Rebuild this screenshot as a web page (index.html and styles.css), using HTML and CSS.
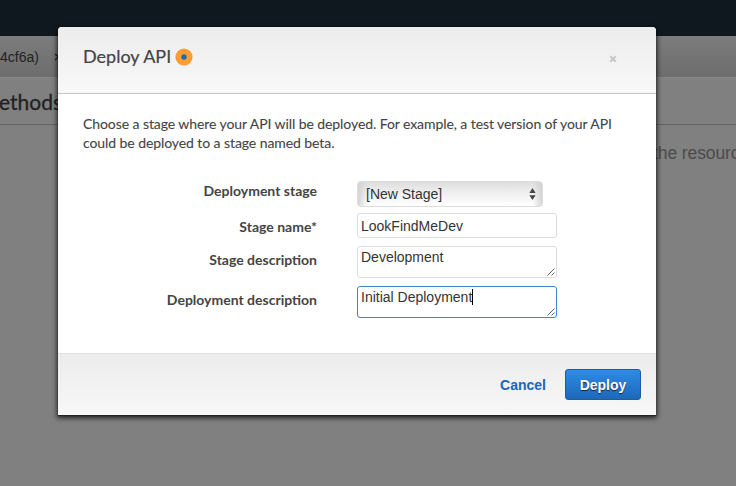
FILE: index.html
```html
<!DOCTYPE html>
<html lang="en">
<head>
<meta charset="utf-8">
<title>Deploy API</title>
<link rel="stylesheet" href="styles.css">
</head>
<body>
<div class="page">
  <div class="topbar"></div>
  <nav class="crumbs"><span>4cf6a)</span><svg class="chevron" width="6" height="10" viewBox="0 0 6 10"><path d="M1 2l3.5 3L1 8" fill="none" stroke="#222" stroke-width="1.3"/></svg></nav>
  <div class="heading"><h1>ethods</h1></div>
  <p class="hint">the resourc</p>
</div>
<section class="modal" role="dialog">
  <header class="modal-header">
    <h2>Deploy API</h2>
    <svg class="info" width="18" height="18" viewBox="0 0 18 18"><circle cx="9" cy="9" r="8.6" fill="#ff9c33"/><circle cx="9" cy="9" r="2.7" fill="#146eb4"/></svg>
    <svg class="close" width="8" height="8" viewBox="0 0 8 8"><path d="M1.2 1.2l5.6 5.6M6.8 1.2L1.2 6.8" stroke="#c8c8c8" stroke-width="2"/></svg>
  </header>
  <div class="modal-body">
    <p class="intro">Choose a stage where your API will be deployed. For example, a test version of your API<br>could be deployed to a stage named beta.</p>
    <div class="form">
      <div class="row row-select"><span class="label">Deployment stage</span>
        <div class="select"><span>[New Stage]</span><svg width="7" height="14" viewBox="0 0 7 14"><path d="M3.5 1L6.6 6H.4zM3.5 13L6.6 8.3H.4z" fill="#444"/></svg></div></div>
      <div class="row row-name"><span class="label">Stage name*</span><div class="field" role="textbox">LookFindMeDev</div></div>
      <div class="row row-area"><span class="label">Stage description</span>
        <div class="field area" role="textbox">Development<svg class="grip" width="8" height="8" viewBox="0 0 8 8"><path d="M.5 7.5l7-7M4.5 7.5l3-3" stroke="#555" stroke-width=".9"/></svg></div></div>
      <div class="row row-area"><span class="label">Deployment description</span>
        <div class="field area focused" role="textbox">Initial Deployment<span class="caret"></span><svg class="grip" width="8" height="8" viewBox="0 0 8 8"><path d="M.5 7.5l7-7M4.5 7.5l3-3" stroke="#555" stroke-width=".9"/></svg></div></div>
    </div>
  </div>
  <footer class="modal-footer"><a class="cancel">Cancel</a><button class="deploy">Deploy</button></footer>
</section>
</body>
</html>
```
FILE: styles.css
```css
* { box-sizing: border-box; }
body {
  margin: 0;
  width: 736px;
  height: 486px;
  overflow: hidden;
  position: relative;
  background: #808080;
  color: #444;
  font-family: Lato, sans-serif;
}
h1, h2, p { margin: 0; font-weight: 400; }
.topbar { height: 36px; background: #10181f; }
.crumbs {
  display: flex;
  align-items: center;
  gap: 15px;
  height: 42px;
  border-bottom: 1px solid #858585;
  background: linear-gradient(#7c7c7c, #6d6d6d);
  color: #222;
  font: 14px "Liberation Sans", Arial, sans-serif;
}
.heading {
  display: flex;
  align-items: center;
  height: 47px;
  border-bottom: 1px solid #636363;
}
.heading h1 { font-size: 21px; color: #222; margin-left: -1px; -webkit-text-stroke: .3px #222; }
.hint {
  padding: 17px 0 0 653px;
  white-space: nowrap;
  font: 17.5px/22px "Liberation Sans", Arial, sans-serif;
  letter-spacing: -.1px;
  color: #4b4b4b;
}
.modal {
  position: absolute;
  left: 58px;
  top: 27px;
  width: 598px;
  height: 388px;
  display: flex;
  flex-direction: column;
  background: #fff;
  border-radius: 4px 4px 0 0;
  box-shadow: 0 1px 1px 0 #222, 0 2px 5px 1px rgba(0, 0, 0, .75);
}
.modal-header {
  display: flex;
  align-items: center;
  height: 67px;
  padding: 0 39px 8px 25px;
  border-bottom: 1px solid #c6c6c6;
  border-radius: 4px 4px 0 0;
  background: linear-gradient(#ececec, #f8f8f8);
}
.modal-header h2 { font-size: 18px; line-height: 22px; -webkit-text-stroke: .2px #444; }
.info { margin: 2px 0 0 4px; }
.close { margin: 6px 0 0 auto; }
.modal-body { flex: 1; padding: 20px 25px 0; }
.intro {
  font-size: 14px;
  line-height: 19px;
  letter-spacing: -.08px;
  white-space: nowrap;
  -webkit-text-stroke: .1px #444;
}
.form { padding-top: 29px; }
.row {
  display: grid;
  grid-template-columns: 234px 200px;
  column-gap: 40px;
  align-items: start;
}
.row-select { height: 33px; }
.row-name { height: 33px; }
.row-area { height: 40px; }
.label { text-align: right; font-size: 14px; font-weight: 700; line-height: 20px; }
.row-name .label { padding-top: 3px; }
.row-area .label { padding-top: 3px; }
.select, .field { font: 14px/16px "Liberation Sans", Arial, sans-serif; color: #333; }
.select {
  display: flex;
  align-items: center;
  justify-content: space-between;
  width: 186px;
  height: 26px;
  padding: 0 6px 0 8px;
  border: 1px solid #dcdcdc;
  border-radius: 4px;
  background: linear-gradient(90deg, rgba(205,205,205,.8), rgba(255,255,255,0) 5%, rgba(255,255,255,0) 95%, rgba(205,205,205,.8)), linear-gradient(#dedede, #efefef 45%, #fff);
}
.field {
  position: relative;
  height: 25px;
  padding: 4px 3px;
  margin-top: -1px;
  border: 1px solid #ddd;
  border-radius: 3px;
  background: #fff;
}
.area { height: 32px; padding-top: 2px; }
.focused { border-color: #3b87cf; }
.caret { display: inline-block; width: 1px; height: 16px; background: #000; vertical-align: top; }
.grip { position: absolute; right: 1px; bottom: 1px; }
.modal-footer {
  display: flex;
  align-items: center;
  justify-content: flex-end;
  gap: 19px;
  height: 62px;
  padding: 0 15px 0 0;
  border-top: 1px solid #e0e0e0;
  background: linear-gradient(#ececec, #f7f7f7);
}
.cancel, .deploy { font: bold 14px "Liberation Sans", Arial, sans-serif; }
.cancel { color: #1c66b7; padding-top: 1px; }
.deploy {
  width: 76px;
  height: 31px;
  padding: 2px 0 0;
  margin-bottom: 1px;
  border: 1px solid #1b5ca3;
  border-radius: 3px;
  background: linear-gradient(#2f8be6, #1d68b8);
  color: #fff;
  text-shadow: 0 1px 1px #123;
}
```
